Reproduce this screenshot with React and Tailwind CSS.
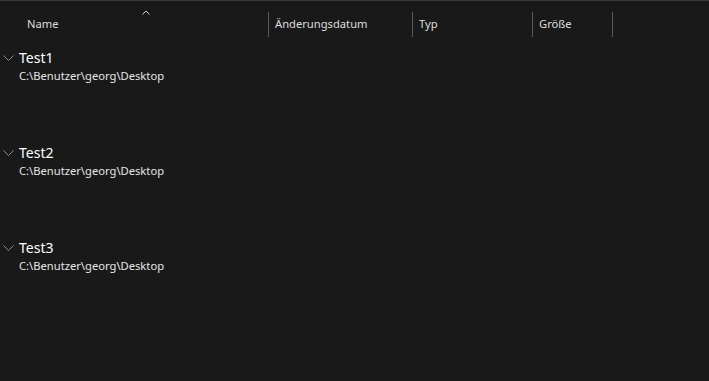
const groups = ['Test1', 'Test2', 'Test3'];

const columns = [
  { label: 'Änderungsdatum', width: 'w-[144px]' },
  { label: 'Typ', width: 'w-[120px]' },
  { label: 'Größe', width: 'w-[80px]' },
];

function Chevron({ dir = 'down', className }) {
  return (
    <svg className={className} width="11" height="6" viewBox="0 0 11 6" fill="none">
      <path
        d={dir === 'down' ? 'M0.5 0.5 L5.5 5.5 L10.5 0.5' : 'M0.5 5.5 L5.5 0.5 L10.5 5.5'}
        stroke="currentColor"
        strokeWidth="1"
      />
    </svg>
  );
}

export default function App() {
  return (
    <div className="flex h-[381px] w-[709px] flex-col overflow-hidden border-t border-[#3a3a3a] bg-[#191919] font-['Noto_Sans',sans-serif] text-white">
      <div className="relative flex h-[36px] items-end">
        <svg
          className="absolute left-[142px] top-[9px] text-[#cfcfcf]"
          width="8"
          height="5"
          viewBox="0 0 8 5"
          fill="none"
        >
          <path d="M0.5 4.5 L4 1 L7.5 4.5" stroke="currentColor" strokeWidth="1" />
        </svg>
        <div className="flex h-[25px] w-[269px] items-center border-r border-[#5a5a5a] pl-[27px] text-[11.2px] text-[#dedede]">
          Name
        </div>
        {columns.map((c) => (
          <div
            key={c.label}
            className={`flex h-[25px] ${c.width} items-center border-r border-[#5a5a5a] pl-[6px] text-[11.2px] text-[#dedede]`}
          >
            {c.label}
          </div>
        ))}
      </div>

      <div className="flex flex-col pt-[11px]">
        {groups.map((g) => (
          <div key={g} className="flex h-[95px] flex-col">
            <div className="flex h-[20px] items-center">
              <Chevron className="ml-[3px] mr-[5px] text-[#8c8c8c]" />
              <span className="text-[14px] leading-[20px]">{g}</span>
            </div>
            <div className="pl-[19px] text-[11.2px] leading-[16px] text-[#e6e6e6]">
              C:\Benutzer\georg\Desktop
            </div>
          </div>
        ))}
      </div>
    </div>
  );
}
